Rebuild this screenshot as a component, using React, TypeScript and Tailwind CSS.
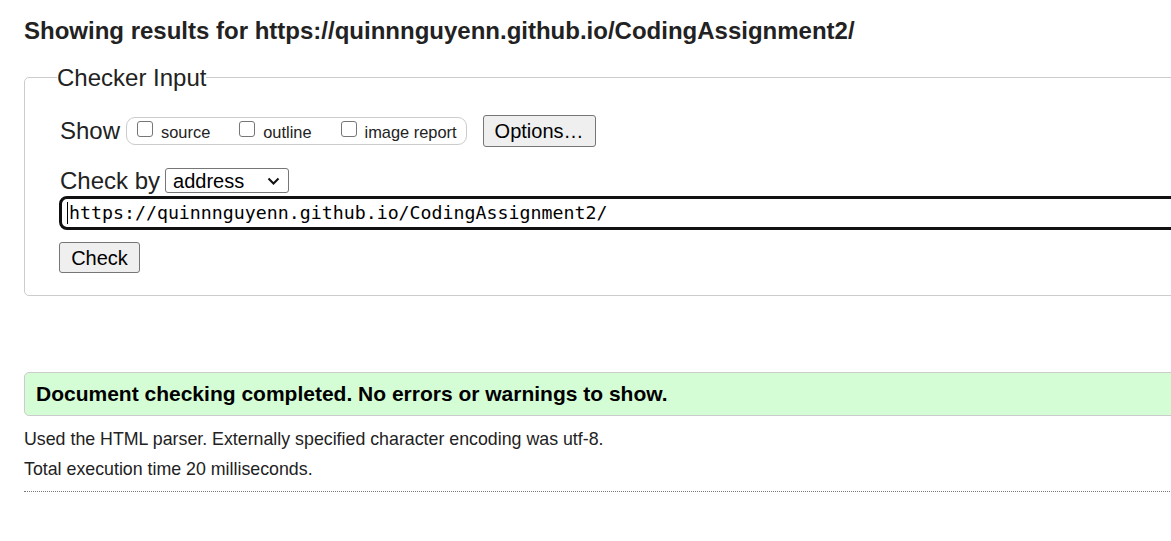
import { clsx } from 'clsx'

const url = 'https://quinnnguyenn.github.io/CodingAssignment2/'

function Box({ label }: { label: string }) {
  return (
    <span className="flex items-center">
      <span className="w-[16px] h-[16px] border border-[#767676] rounded-[3px] bg-white mr-[8px] -mt-[4px]" />
      <span className="text-[16.4px] mt-[3px]">{label}</span>
    </span>
  )
}

function Btn({ children, className }: { children: string; className?: string }) {
  return (
    <span
      className={clsx(
        'inline-flex items-center justify-center bg-[#efefef] border border-[#767676] rounded-[3px] text-[20px] text-black',
        className
      )}
    >
      {children}
    </span>
  )
}

export default function App() {
  return (
    <div className="w-full overflow-hidden bg-white min-h-[541px] font-['Liberation_Sans',Arial,sans-serif] text-[#222]">
      <div className="ml-[24px] w-[1400px]">
        <h2 className="pt-[18px] text-[24px] leading-[26px] font-bold">Showing results for {url}</h2>

        <fieldset className="mt-[20px] border border-[#ccc] rounded-[5px] pl-[35px] pb-[22px]">
          <legend className="-ml-[3px] text-[24px] leading-[27px]">Checker Input</legend>

          <div className="flex items-center h-[32px] mt-[24px]">
            <span className="text-[24px] mr-[6px]">Show</span>
            <span className="flex items-center gap-[29px] h-[28px] border border-[#ccc] rounded-[9px] pl-[10px] pr-[9px]">
              <Box label="source" />
              <Box label="outline" />
              <Box label="image report" />
            </span>
            <Btn className="ml-[16px] w-[113px] h-[32px]">Options…</Btn>
          </div>

          <div className="flex items-center mt-[21px] h-[25px]">
            <span className="text-[24px] mr-[5px]">Check by</span>
            <span className="flex items-center justify-between w-[124px] h-[25px] border border-[#767676] rounded-[3px] pl-[7px] pr-[8px] text-[20px] text-black">
              address
              <svg width="13" height="8" viewBox="0 0 13 8" fill="none" stroke="#111" strokeWidth="2">
                <path d="M1.5 1.5 L6.5 6.5 L11.5 1.5" />
              </svg>
            </span>
          </div>

          <div className="-ml-[1px] mt-[3px] h-[34px] border-[3px] border-[#111] rounded-[8px] flex items-center pl-[5px] font-['DejaVu_Sans_Mono',monospace] text-[18.25px] text-black">
            <span className="w-[1px] h-[22px] bg-black" />
            <span className="ml-[1px]">{url}</span>
          </div>

          <Btn className="-ml-[1px] mt-[12px] w-[81px] h-[31px]">Check</Btn>
        </fieldset>

        <div className="mt-[76px] h-[44px] bg-[#d5fdd5] border border-[#ccc] rounded-[5px] flex items-center pl-[11px]">
          <span className="text-[21px] font-bold text-black">
            Document checking completed. No errors or warnings to show.
          </span>
        </div>

        <p className="mt-[8px] text-[17.8px] leading-[30px]">
          Used the HTML parser. Externally specified character encoding was utf-8.
        </p>
        <p className="text-[17.8px] leading-[30px]">Total execution time 20 milliseconds.</p>

        <div className="mt-[7px] border-t border-dotted border-[#777]" />
      </div>
    </div>
  )
}
